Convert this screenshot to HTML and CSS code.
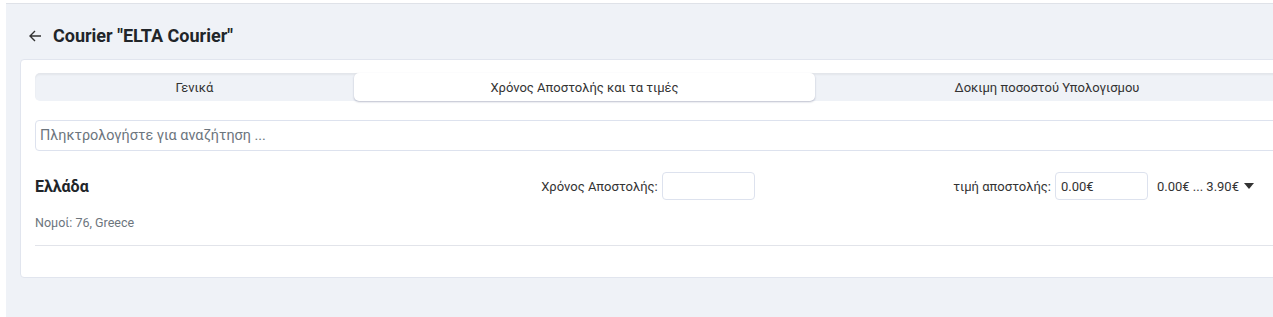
FILE: index.html
```html
<!DOCTYPE html>
<html lang="el">
<head>
    <meta charset="UTF-8">
    <meta name="viewport" content="width=device-width, initial-scale=1.0">
    <title>Courier ELTA Courier</title>
    <link rel="stylesheet" href="styles.css">
</head>
<body>
    <div class="layout">
        <div class="sidebar"></div>

        <div class="main">
            <div class="topbar"></div>

            <div class="content">
                <div class="page-title">
                    <span class="back-link">
                        <svg width="14" height="14" viewBox="0 0 14 14">
                            <path d="M13 7H2M7 2L2 7l5 5" fill="none" stroke="#333" stroke-width="1.4"/>
                        </svg>
                    </span>
                    <h1>Courier "ELTA Courier"</h1>
                </div>

                <div class="card">
                    <div class="tabs">
                        <div class="tab tab-first">Γενικά</div>
                        <div class="tab tab-second active">Χρόνος Αποστολής και τα τιμές</div>
                        <div class="tab tab-third">Δοκιμη ποσοστού Υπολογισμου</div>
                    </div>

                    <input type="text" class="search" placeholder="Πληκτρολογήστε για αναζήτηση ...">

                    <div class="region">
                        <div class="region-row">
                            <div class="region-name">Ελλάδα</div>

                            <div class="field field-center">
                                <label for="sendTime">Χρόνος Αποστολής:</label>
                                <input type="text" id="sendTime" class="small-input">
                            </div>

                            <div class="field field-right">
                                <label for="sendPrice">τιμή αποστολής:</label>
                                <input type="text" id="sendPrice" class="small-input" value="0.00€">
                                <span class="range">0.00€ ... 3.90€</span>
                                <span class="caret"></span>
                            </div>
                        </div>
                        <div class="region-info">Νομοί: 76, Greece</div>
                    </div>
                </div>
            </div>
        </div>
    </div>
</body>
</html>
```

FILE: styles.css
```css
html, body {
    margin: 0;
    padding: 0;
    overflow: hidden;
}

body {
    font-family: Roboto, "Noto Sans", Arial, sans-serif;
    background-color: #eff2f7;
    color: #333;
    font-size: 13px;
}

.layout {
    display: flex;
    width: 1300px;
    min-height: 317px;
}

.sidebar {
    width: 6px;
    background-color: #fff;
    flex-shrink: 0;
}

.main {
    flex-grow: 1;
}

.topbar {
    height: 3px;
    background-color: #fff;
    border-bottom: 1px solid #dfe2e8;
}

.content {
    padding: 18px 0 0 14px;
}

.page-title {
    display: flex;
    align-items: center;
    height: 27px;
    padding-left: 8px;
    margin-bottom: 10px;
}

.back-link {
    display: flex;
    margin-right: 11px;
}

.page-title h1 {
    margin: 0;
    font-size: 18px;
    font-weight: 700;
    color: #212529;
}

.card {
    background-color: #fff;
    border: 1px solid #e1e5ee;
    border-radius: 4px;
    padding: 13px 14px 31px 14px;
    margin-right: 6px;
}

.tabs {
    display: flex;
    background-color: #eff2f7;
    border-radius: 5px;
    height: 28px;
    box-shadow: inset 0 2px 2px rgba(0, 0, 0, 0.05);
}

.tab {
    display: flex;
    align-items: center;
    justify-content: center;
    font-size: 13px;
    color: #333;
}

.tab-first {
    flex: 0 0 319px;
}

.tab-second {
    flex: 0 0 461px;
}

.tab-third {
    flex: 1 1 auto;
}

.tab.active {
    background-color: #fff;
    border-radius: 5px;
    box-shadow: 0 1px 2px rgba(60, 70, 110, 0.35);
}

.search {
    display: block;
    box-sizing: border-box;
    width: 100%;
    height: 31px;
    margin-top: 19px;
    padding: 0 4px;
    border: 1px solid #dde2ee;
    border-radius: 4px;
    font-family: inherit;
    font-size: 14.4px;
    outline: none;
}

.search::placeholder {
    color: #6c757d;
}

.region {
    border-bottom: 1px solid #e2e4ea;
    padding-top: 21px;
    padding-bottom: 15px;
}

.region-row {
    display: grid;
    grid-template-columns: 1fr 1fr 1fr;
    align-items: center;
}

.region-name {
    font-size: 16px;
    font-weight: 700;
    color: #212529;
}

.field {
    display: flex;
    align-items: center;
}

.field-center {
    justify-content: center;
    padding-right: 18px;
}

.field-right {
    justify-content: flex-end;
    padding-right: 25px;
}

.field label {
    margin-right: 4px;
    color: #333;
}

.small-input {
    box-sizing: border-box;
    width: 93px;
    height: 28px;
    padding: 0 5px;
    border: 1px solid #dde2ee;
    border-radius: 4px;
    font-family: inherit;
    font-size: 13px;
    color: #333;
    outline: none;
}

.range {
    margin-left: 9px;
    color: #333;
}

.caret {
    width: 0;
    height: 0;
    margin-left: 5px;
    border-left: 5.5px solid transparent;
    border-right: 5.5px solid transparent;
    border-top: 6px solid #333;
}

.region-info {
    margin-top: 15px;
    font-size: 12.5px;
    color: #6c757d;
}
```
